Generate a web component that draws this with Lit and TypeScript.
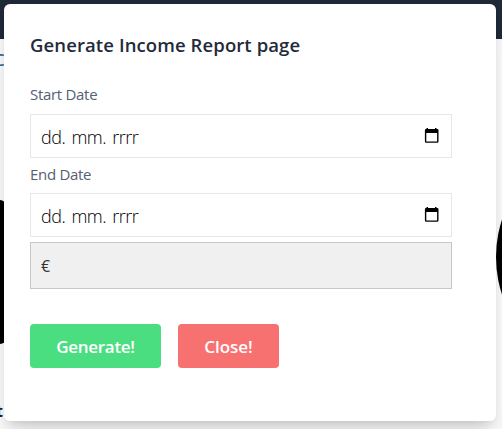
import { LitElement, html, css } from "lit";
import { customElement, property } from "lit/decorators.js";

@customElement("date-field")
class DateField extends LitElement {
  @property() label = "";

  static styles = css`
    :host { display: block; }
    .label { height: 36px; line-height: 32px; font-size: 15px; font-weight: 400; color: #566072; letter-spacing: -0.3px; }
    :host([compact]) .label { height: 35px; }
    .box { box-sizing: border-box; height: 44px; border: 1px solid #e5e7eb; padding: 0 12px 0 10px; display: flex; align-items: center; justify-content: space-between; background: #fff; }
    .value { font-size: 18px; line-height: 28px; padding-top: 2px; font-weight: 300; color: #000; letter-spacing: -0.45px; word-spacing: 1.8px; white-space: pre; }
    .icon { display: block; width: 15px; height: 16px; }
  `;

  render() {
    return html`
      <div class="label">${this.label}</div>
      <div class="box">
        <span class="value">dd. mm. rrrr</span>
        <svg class="icon" viewBox="0 0 15 16">
          <path fill="#000" fill-rule="evenodd" d="M2.500 0H4v1h7V0h1.500v1H13.200a1.300 1.300 0 0 1 1.300 1.300v11.200a1.300 1.300 0 0 1-1.300 1.300H2.200a1.300 1.300 0 0 1-1.300-1.300V2.300A1.300 1.300 0 0 1 2.200 1h.3zM2.300 5v8.400h10.800V5z"/>
        </svg>
      </div>
    `;
  }
}

@customElement("app-root")
class AppRoot extends LitElement {
  static styles = css`
    :host { display: block; position: relative; width: 502px; height: 429px; overflow: hidden; background: #f9f9f9; font-family: "Open Sans", "Noto Sans", sans-serif; }
    .bar { height: 39px; background: #1f2937; }
    .behind { position: absolute; }
    .link { left: -6px; top: 49px; font-size: 17px; line-height: 22px; font-weight: 600; color: #3c6a94; }
    .tail { left: -4px; top: 400px; font-size: 16px; line-height: 22px; font-weight: 700; color: #10243e; }
    .block { left: -20px; top: 200px; width: 26px; height: 144px; border-radius: 6px; background: #000; }
    .disc { left: 496px; top: 137px; width: 240px; height: 240px; border-radius: 50%; background: #000; }
    .modal { position: absolute; left: 4px; top: 4px; width: 492px; height: 417px; box-sizing: border-box; padding: 26px 44px 0 26px; border-radius: 6px; background: #fff; box-shadow: 0 20px 25px -5px rgba(0,0,0,.1), 0 8px 10px -6px rgba(0,0,0,.1), 0 2px 8px rgba(0,0,0,.05); }
    .title { margin: 0 0 18px; height: 30px; line-height: 30px; font-size: 18.5px; font-weight: 600; color: #232b3b; letter-spacing: 0.1px; white-space: nowrap; }
    .amount { box-sizing: border-box; height: 47px; margin-top: 5px; padding: 0 10px; line-height: 46px; border: 1px solid #c8c8c8; background: #f0f0f0; font-size: 16px; font-weight: 400; color: #333; }
    .actions { display: flex; gap: 17px; margin-top: 35px; }
    .btn { height: 44px; border: 0; padding: 0; border-radius: 4px; font: 600 17px/46px "Open Sans", sans-serif; color: #fff; text-align: center; }
    .generate { width: 131px; background: #4ade80; letter-spacing: -0.3px; }
    .close { width: 101px; background: #f87171; letter-spacing: -0.05px; }
  `;

  render() {
    return html`
      <div class="bar"></div>
      <span class="behind link">C</span>
      <div class="behind block"></div>
      <div class="behind disc"></div>
      <span class="behind tail">t</span>
      <section class="modal">
        <h3 class="title">Generate Income Report page</h3>
        <date-field label="Start Date"></date-field>
        <date-field compact label="End Date"></date-field>
        <div class="amount">€</div>
        <div class="actions">
          <button class="btn generate">Generate!</button>
          <button class="btn close">Close!</button>
        </div>
      </section>
    `;
  }
}
